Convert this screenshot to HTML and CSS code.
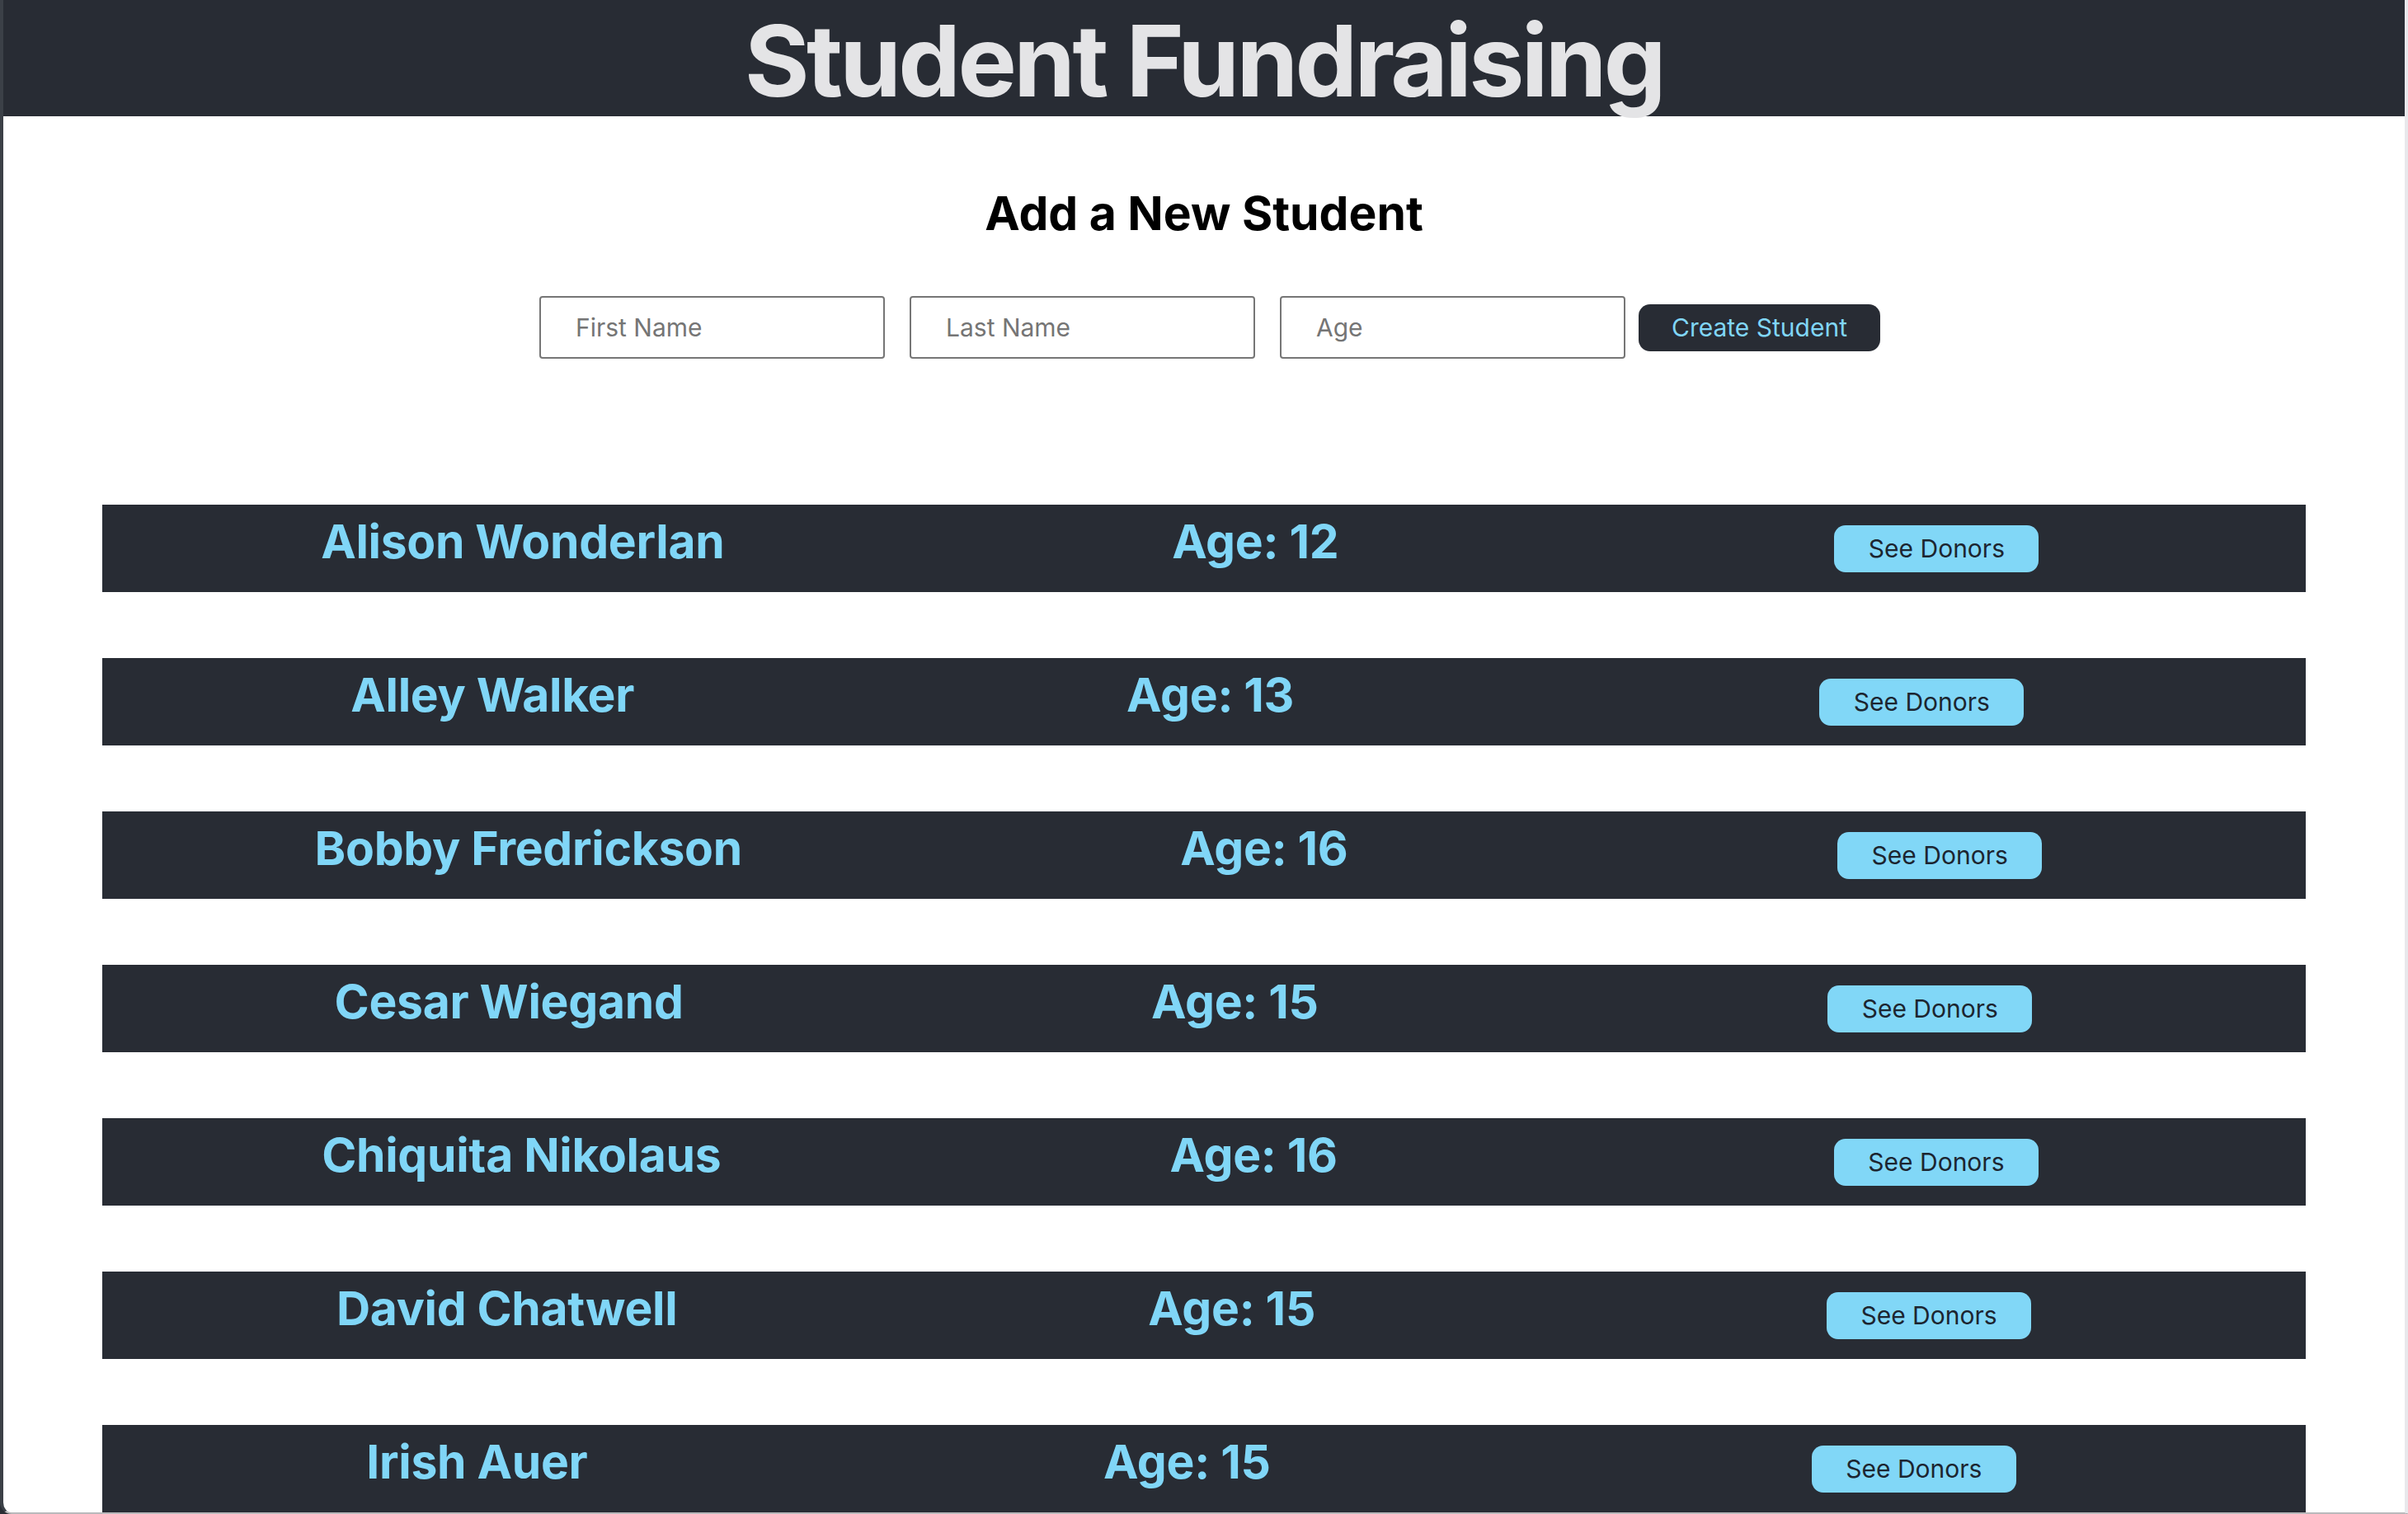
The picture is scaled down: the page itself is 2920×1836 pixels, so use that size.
FILE: index.html
```html
<!DOCTYPE html>
<html lang="en">
<head>
<meta charset="utf-8">
<title>Student Fundraising</title>
<link rel="stylesheet" href="styles.css">
</head>
<body>
<div class="window">
  <header class="app-header">
    <h1 class="app-title">Student Fundraising</h1>
  </header>
  <main class="content">
    <h2 class="section-title">Add a New Student</h2>
    <form class="student-form">
      <input class="field" type="text" placeholder="First Name">
      <input class="field" type="text" placeholder="Last Name">
      <input class="field" type="text" placeholder="Age">
      <button class="create-btn" type="button">Create Student</button>
    </form>
    <ul class="student-list">
      <li class="student-row">
        <h3 class="student-name">Alison Wonderlan</h3>
        <h3 class="student-age">Age: 12</h3>
        <div class="student-actions"><button class="donors-btn" type="button">See Donors</button></div>
      </li>
      <li class="student-row">
        <h3 class="student-name">Alley Walker</h3>
        <h3 class="student-age">Age: 13</h3>
        <div class="student-actions"><button class="donors-btn" type="button">See Donors</button></div>
      </li>
      <li class="student-row">
        <h3 class="student-name">Bobby Fredrickson</h3>
        <h3 class="student-age">Age: 16</h3>
        <div class="student-actions"><button class="donors-btn" type="button">See Donors</button></div>
      </li>
      <li class="student-row">
        <h3 class="student-name">Cesar Wiegand</h3>
        <h3 class="student-age">Age: 15</h3>
        <div class="student-actions"><button class="donors-btn" type="button">See Donors</button></div>
      </li>
      <li class="student-row">
        <h3 class="student-name">Chiquita Nikolaus</h3>
        <h3 class="student-age">Age: 16</h3>
        <div class="student-actions"><button class="donors-btn" type="button">See Donors</button></div>
      </li>
      <li class="student-row">
        <h3 class="student-name">David Chatwell</h3>
        <h3 class="student-age">Age: 15</h3>
        <div class="student-actions"><button class="donors-btn" type="button">See Donors</button></div>
      </li>
      <li class="student-row">
        <h3 class="student-name">Irish Auer</h3>
        <h3 class="student-age">Age: 15</h3>
        <div class="student-actions"><button class="donors-btn" type="button">See Donors</button></div>
      </li>
    </ul>
  </main>
</div>
</body>
</html>
```

FILE: styles.css
```css
* { box-sizing: border-box; }

html, body {
  margin: 0;
  padding: 0;
  background: #2a2e35;
  font-family: Inter, "Liberation Sans", sans-serif;
}

.window {
  height: 1836px;
  overflow: hidden;
  background: #ffffff;
  border-left: 4px solid #3b4047;
  border-right: 4px solid #e8e8ec;
  border-bottom: 2px solid #b9b9bb;
  border-bottom-left-radius: 14px;
}

.app-header {
  height: 141px;
  background: #282c34;
  padding-top: 14px;
  text-align: center;
}

.app-title {
  margin: 0;
  font-size: 120px;
  line-height: 1;
  font-weight: 700;
  color: #e4e4e6;
  letter-spacing: -3.6px;
}

.content {
  display: flex;
  flex-direction: column;
  align-items: stretch;
}

.section-title {
  margin: 89px 0 0;
  font-size: 57px;
  line-height: 1;
  font-weight: 700;
  color: #000;
  text-align: center;
}

.student-form {
  display: flex;
  justify-content: center;
  align-items: center;
  padding-left: 14px;
  margin-top: 72px;
}

.field {
  width: 419px;
  height: 76px;
  margin-right: 30px;
  border: 2px solid #767676;
  border-radius: 4px;
  padding: 0 0 0 42px;
  font-family: Inter, "Liberation Sans", sans-serif;
  font-size: 30px;
  color: #222;
  background: #fff;
}

.field:nth-of-type(3) { margin-right: 16px; }

.field::placeholder { color: #757575; }

.create-btn {
  width: 293px;
  height: 57px;
  border: none;
  border-radius: 14px;
  background: #282c34;
  color: #80d6f7;
  font-family: Inter, "Liberation Sans", sans-serif;
  font-size: 30px;
  padding: 0;
}

.student-list {
  list-style: none;
  margin: 177px 120px 0;
  padding: 0;
  display: flex;
  flex-direction: column;
  gap: 80px;
}

.student-row {
  display: flex;
  align-items: flex-start;
  height: 106px;
  background: #282c34;
}

.student-name,
.student-age {
  margin: 16px 0 0;
  font-size: 57px;
  line-height: 1;
  font-weight: 700;
  color: #80d6f7;
  text-align: center;
  white-space: nowrap;
  letter-spacing: -0.3px;
}

.student-name {
  flex: 2 1 auto;
}

.student-age {
  flex: 1 1 auto;
  padding: 0 145px;
}

.student-actions {
  flex: 1 1 auto;
  padding: 0 191px;
  align-self: center;
  display: flex;
  justify-content: center;
}

.donors-btn {
  width: 248px;
  height: 57px;
  border: none;
  border-radius: 14px;
  background: #81d7f7;
  color: #1c2530;
  font-family: Inter, "Liberation Sans", sans-serif;
  font-size: 30px;
  padding: 0;
}
```
